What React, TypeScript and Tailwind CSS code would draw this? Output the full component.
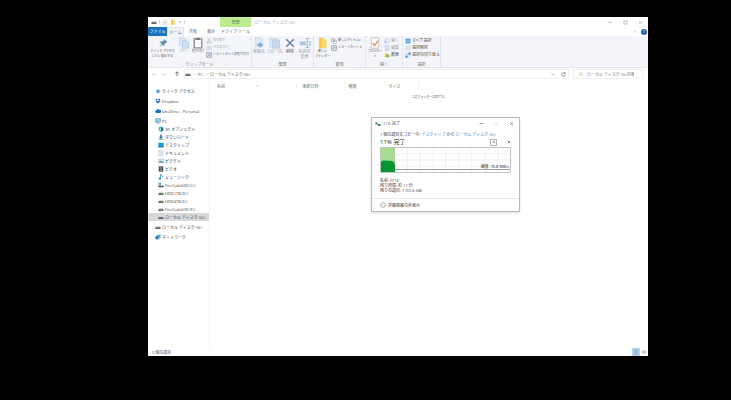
import type { ReactNode } from "react";
import clsx from "clsx";

type IconProps = { className?: string };

function Svg({ className = "size-2", children }: { className?: string; children: ReactNode }) {
  return (
    <svg viewBox="0 0 16 16" fill="none" className={clsx("shrink-0", className)} aria-hidden="true">
      {children}
    </svg>
  );
}

const PinIcon = ({ className }: IconProps) => (
  <Svg className={className}>
    <path d="M10 3l4 4-2 .5-2 2-.5 3L7 10l-4 4 3-5-2.500-2.500 3-.5L9 5z" fill="#5f8fb0" />
  </Svg>
);

const PagesIcon = ({ className }: IconProps) => (
  <Svg className={className}>
    <path d="M2 1h6l2 2v8H2z" fill="#dceaf8" stroke="#b5cde6" />
    <path d="M6 5h6l2 2v8H6z" fill="#cfe1f4" stroke="#a9c5e2" />
  </Svg>
);

const ClipboardIcon = ({ className }: IconProps) => (
  <Svg className={className}>
    <path d="M3 2.500h10v12H3z" fill="#fff" stroke="#8a8b8f" strokeWidth="1.800" />
    <path d="M5.500 1h5v3h-5z" fill="#77787c" />
  </Svg>
);

const ScissorsIcon = ({ className }: IconProps) => (
  <Svg className={className}>
    <path d="M5 10l6-9M11 10L5 1" stroke="#a7adb5" strokeWidth="1.500" />
    <circle cx="4" cy="12" r="2.500" stroke="#a7adb5" strokeWidth="1.500" />
    <circle cx="12" cy="12" r="2.500" stroke="#a7adb5" strokeWidth="1.500" />
  </Svg>
);

const PathIcon = ({ className }: IconProps) => (
  <Svg className={className}>
    <path d="M1 4h14v9H1z" fill="#e9eef5" stroke="#b5bfcc" />
    <path d="M4 6l2 4 2-4 2 4" stroke="#8d9bad" />
  </Svg>
);

const ShortcutIcon = ({ className }: IconProps) => (
  <Svg className={className}>
    <path d="M2 2h12v12H2z" fill="#fff" stroke="#77808c" strokeWidth="2" />
    <path d="M5 11l5-5M6 6h4v4" stroke="#456f9c" strokeWidth="1.500" />
  </Svg>
);

const MoveToIcon = ({ className }: IconProps) => (
  <Svg className={className}>
    <path d="M3 1h7l3 3v9H3z" fill="#dfeaf6" stroke="#c6d7e9" />
    <path d="M6 9h3V6.500l4.500 4L9 14.500V12H6z" fill="#7fadd8" />
  </Svg>
);

const CopyToIcon = ({ className }: IconProps) => (
  <Svg className={className}>
    <path d="M1 2h9v11H1z" fill="#dfeaf6" stroke="#bdd0e5" />
    <path d="M5 4h9v11H5z" fill="#c4dcf3" stroke="#abc7e3" />
  </Svg>
);

const DeleteIcon = ({ className }: IconProps) => (
  <Svg className={className}>
    <path d="M3 3l10 10M13 3L3 13" stroke="#6f86a8" strokeWidth="2.200" />
  </Svg>
);

const RenameIcon = ({ className }: IconProps) => (
  <Svg className={className}>
    <path d="M1 6h8v5H1z" fill="#a3c5e8" />
    <path d="M9 2h4M9 14h4M11 2v12M13 6h2v5h-2" stroke="#9db3cb" strokeWidth="1.300" />
  </Svg>
);

const FolderIcon = ({ className }: IconProps) => (
  <Svg className={className}>
    <path d="M3 1h6l1 2h3v12H3z" fill="#fbd86c" />
    <path d="M3 1h3v14H3z" fill="#f2c443" />
  </Svg>
);

const NewItemIcon = ({ className }: IconProps) => (
  <Svg className={className}>
    <path d="M1 2h8v7H1zM6 6h8v8H6z" fill="#fff" stroke="#8b8f96" strokeWidth="1.500" />
    <path d="M3 4h4v2H3z" fill="#eab84d" />
  </Svg>
);

const PropertiesIcon = ({ className }: IconProps) => (
  <Svg className={className}>
    <path d="M3 1h10v14H3z" fill="#fff" stroke="#b4b7bc" />
    <path d="M5 8l2.500 3.500L12 5" stroke="#e5914f" strokeWidth="1.800" />
  </Svg>
);

const OpenIcon = ({ className }: IconProps) => (
  <Svg className={className}>
    <path d="M3 2h11v11H3z" fill="#eaf1f9" stroke="#a7bdd6" />
    <path d="M1 14V7h6v7z" fill="#a9cbed" />
  </Svg>
);

const HistoryIcon = ({ className }: IconProps) => (
  <Svg className={className}>
    <path d="M2 4h6l1 2h5v8H2z" fill="#e5d23c" />
    <circle cx="10" cy="10" r="4" fill="#76b043" />
    <path d="M10 8v2.500h2" stroke="#fff" />
  </Svg>
);

const SelectAllIcon = ({ className }: IconProps) => (
  <Svg className={className}>
    <path d="M1 1h14v14H1z" fill="#b9dcf8" />
    <path d="M2 2h5v5H2zM9 2h5v5H9zM2 9h5v5H2zM9 9h5v5H9z" fill="#3e93d6" />
  </Svg>
);

const SelectNoneIcon = ({ className }: IconProps) => (
  <Svg className={className}>
    <path d="M2 2h5v5H2zM9 2h5v5H9zM2 9h5v5H2zM9 9h5v5H9z" stroke="#bbc3cc" />
  </Svg>
);

const InvertIcon = ({ className }: IconProps) => (
  <Svg className={className}>
    <path d="M9 1h6v6H9zM1 9h6v6H1z" fill="#3e93d6" />
    <path d="M2 2h5v5H2zM9 9h5v5H9z" stroke="#9ac4e8" />
  </Svg>
);

const DriveIcon = ({ className }: IconProps) => (
  <Svg className={className}>
    <path d="M3 6h10l2 3H1z" fill="#c4c6c9" />
    <path d="M1 9h14v4H1z" fill="#4b4d51" />
    <path d="M11 10.500h2v1h-2z" fill="#8ae08d" />
  </Svg>
);

const SystemDriveIcon = ({ className }: IconProps) => (
  <Svg className={className}>
    <path d="M1 2h3v3H1zM5 2h3v3H5zM1 6h3v3H1zM5 6h3v3H5z" fill="#2f95d8" />
    <path d="M1 10h14v4H1z" fill="#4b4d51" />
  </Svg>
);

const StarIcon = ({ className }: IconProps) => (
  <Svg className={className}>
    <path d="M8 1l2 5 5 .5-4 3.500 1.500 5L8 12l-4.500 3L5 10 1 6.500 6 6z" fill="#3f9bd9" />
  </Svg>
);

const DropboxIcon = ({ className }: IconProps) => (
  <Svg className={className}>
    <path d="M4.500 1L8 3.500 4.500 6 1 3.500zM11.500 1L15 3.500 11.500 6 8 3.500zM4.500 6L8 8.500 4.500 11 1 8.500zM11.500 6L15 8.500 11.500 11 8 8.500zM8 9.500l3.500 2.500L8 14.500 4.500 12z" fill="#1667b7" />
  </Svg>
);

const CloudIcon = ({ className }: IconProps) => (
  <Svg className={className}>
    <path d="M4 13a3.500 3.500 0 010-7 4.500 4.500 0 018-1 4 4 0 011 8z" fill="#1673bd" />
  </Svg>
);

const ComputerIcon = ({ className }: IconProps) => (
  <Svg className={className}>
    <path d="M1 2h14v9H1z" fill="#8fd3f3" stroke="#4590bd" strokeWidth="1.500" />
    <path d="M5 14h6M8 11v3" stroke="#4b7c9a" strokeWidth="1.500" />
  </Svg>
);

const CubeIcon = ({ className }: IconProps) => (
  <Svg className={className}>
    <path d="M8 1l6 3v8l-6 3-6-3V4z" fill="#31b1c9" />
    <path d="M8 7l6-3v8l-6 3z" fill="#19738c" />
    <path d="M5 6l3 1v4L5 10z" fill="#e9fbff" />
  </Svg>
);

const DownloadIcon = ({ className }: IconProps) => (
  <Svg className={className}>
    <path d="M6 1h4v6h4l-6 6-6-6h4z" fill="#287fbe" />
    <path d="M2 13h12v2H2z" fill="#70808e" />
  </Svg>
);

const DesktopIcon = ({ className }: IconProps) => (
  <Svg className={className}>
    <path d="M1 2h14v12H1z" fill="#149be0" />
    <path d="M1 12h14v2H1z" fill="#0c649b" />
  </Svg>
);

const DocumentIcon = ({ className }: IconProps) => (
  <Svg className={className}>
    <path d="M3 1h10v14H3z" fill="#f7fafc" stroke="#8c9daa" />
    <path d="M5 5h6M5 8h6M5 11h6" stroke="#6fa3c7" />
  </Svg>
);

const PictureIcon = ({ className }: IconProps) => (
  <Svg className={className}>
    <path d="M1 3h14v10H1z" fill="#cfe9f5" stroke="#889ba8" />
    <path d="M2 12l4-5 3 3 2-2 3 4z" fill="#3e8b8a" />
  </Svg>
);

const VideoIcon = ({ className }: IconProps) => (
  <Svg className={className}>
    <path d="M2 1h12v14H2z" fill="#43474e" />
    <path d="M5 3h6v4H5zM5 9h6v4H5z" fill="#8298ad" />
  </Svg>
);

const MusicIcon = ({ className }: IconProps) => (
  <Svg className={className}>
    <path d="M7 1v11" stroke="#1682bb" strokeWidth="2" />
    <path d="M7 1c1 3 6 3 5 8" stroke="#1682bb" strokeWidth="2" />
    <circle cx="5" cy="12" r="3" fill="#1682bb" />
  </Svg>
);

const NetworkIcon = ({ className }: IconProps) => (
  <Svg className={className}>
    <path d="M5 2h10v8H5z" fill="#55b0e2" />
    <circle cx="5" cy="10" r="4.500" fill="#2378ae" />
    <path d="M9 13h5" stroke="#5d7d92" strokeWidth="2" />
  </Svg>
);

const SearchIcon = ({ className }: IconProps) => (
  <Svg className={className}>
    <circle cx="10" cy="6" r="4" stroke="#a5a5a5" strokeWidth="1.500" />
    <path d="M7 9l-5 5" stroke="#a5a5a5" strokeWidth="1.500" />
  </Svg>
);

const CopyingIcon = ({ className }: IconProps) => (
  <Svg className={className}>
    <path d="M1 4h6v5H1z" fill="#438b73" />
    <path d="M8 8h7v5H8z" fill="#396d91" />
    <path d="M6 9l3 3" stroke="#4aa864" strokeWidth="2" />
  </Svg>
);

function Stroke({ d, className = "size-1.5 text-neutral-500" }: { d: string; className?: string }) {
  return (
    <Svg className={className}>
      <path d={d} stroke="currentColor" strokeWidth="2" />
    </Svg>
  );
}

const MINIMIZE = "M2 8h12";
const MAXIMIZE = "M3 3h10v10H3z";
const CLOSE = "M3 3l10 10M13 3L3 13";
const CHEVRON_DOWN = "M3 6l5 5 5-5";
const CHEVRON_RIGHT = "M6 3l5 5-5 5";

type IconType = (props: IconProps) => ReactNode;

interface BigButtonProps {
  icon: IconType;
  lines: string[];
  width: string;
  muted?: boolean;
}

function BigButton({ icon: Icon, lines, width, muted }: BigButtonProps) {
  return (
    <button
      className={clsx(
        "flex shrink-0 flex-col items-center whitespace-nowrap",
        width,
        muted ? "text-neutral-400" : "text-neutral-600"
      )}
    >
      <Icon className="size-3" />
      {lines.map((line) => (
        <span key={line}>{line}</span>
      ))}
    </button>
  );
}

function SmallButton({ icon: Icon, label, muted }: { icon: IconType; label: string; muted?: boolean }) {
  return (
    <button
      className={clsx(
        "flex h-[7px] items-center gap-px whitespace-nowrap",
        muted ? "text-neutral-400" : "text-neutral-600"
      )}
    >
      <Icon className="size-[6px]" />
      {label}
    </button>
  );
}

interface RibbonGroupProps {
  label: string;
  width: string;
  dense?: boolean;
  children: ReactNode;
}

function RibbonGroup({ label, width, dense, children }: RibbonGroupProps) {
  return (
    <div className={clsx("flex shrink-0 flex-col justify-between border-r border-[#e3e4e9] pt-px", width)}>
      <div className={clsx("flex", dense && "text-[3px]")}>{children}</div>
      <div className="text-center text-neutral-500">{label}</div>
    </div>
  );
}

function Ribbon() {
  return (
    <div className="flex h-8 shrink-0 overflow-hidden border-b border-[#e6e7eb] bg-[#f4f5fa]">
      <RibbonGroup label="クリップボード" width="w-[104px]" dense>
        <BigButton icon={PinIcon} lines={["クイック アクセス", "にピン留めする"]} width="w-[29px]" />
        <BigButton icon={PagesIcon} lines={["コピー"]} width="w-[13px]" muted />
        <BigButton icon={ClipboardIcon} lines={["貼り付け"]} width="w-[16px]" />
        <div className="flex flex-col">
          <SmallButton icon={ScissorsIcon} label="切り取り" muted />
          <SmallButton icon={PathIcon} label="パスのコピー" muted />
          <SmallButton icon={ShortcutIcon} label="ショートカットの貼り付け" />
        </div>
      </RibbonGroup>
      <RibbonGroup label="整理" width="w-[62px]">
        <BigButton icon={MoveToIcon} lines={["移動先"]} width="w-[14px]" muted />
        <BigButton icon={CopyToIcon} lines={["コピー先"]} width="w-[17px]" muted />
        <BigButton icon={DeleteIcon} lines={["削除"]} width="w-[14px]" />
        <BigButton icon={RenameIcon} lines={["名前の", "変更"]} width="w-[15px]" muted />
      </RibbonGroup>
      <RibbonGroup label="新規" width="w-[52px]" dense>
        <BigButton icon={FolderIcon} lines={["新しい", "フォルダー"]} width="w-[17px]" />
        <div className="flex flex-col">
          <SmallButton icon={NewItemIcon} label="新しいアイテム ▾" />
          <SmallButton icon={ShortcutIcon} label="ショートカット ▾" />
        </div>
      </RibbonGroup>
      <RibbonGroup label="開く" width="w-[37px]" dense>
        <BigButton icon={PropertiesIcon} lines={["プロパティ", "▾"]} width="w-[18px]" />
        <div className="flex flex-col text-[4px]">
          <SmallButton icon={OpenIcon} label="開く" muted />
          <SmallButton icon={DocumentIcon} label="編集" muted />
          <SmallButton icon={HistoryIcon} label="履歴" />
        </div>
      </RibbonGroup>
      <RibbonGroup label="選択" width="w-[38px]">
        <div className="flex flex-col pl-0.5">
          <SmallButton icon={SelectAllIcon} label="すべて選択" />
          <SmallButton icon={SelectNoneIcon} label="選択解除" />
          <SmallButton icon={InvertIcon} label="選択の切り替え" />
        </div>
      </RibbonGroup>
    </div>
  );
}

function TitleBar() {
  return (
    <header className="flex h-[19px] shrink-0">
      <div className="flex w-[72px] flex-col">
        <div className="flex h-2.5 items-center gap-0.5 pl-[3px]">
          <DriveIcon className="size-[6px]" />
          <span className="h-1 border-l border-neutral-300" />
          <PropertiesIcon className="size-[6px]" />
          <FolderIcon className="size-[6px]" />
          <Stroke d={CHEVRON_DOWN} className="size-1 text-neutral-600" />
          <span className="h-1 border-l border-neutral-300" />
        </div>
        <nav className="flex h-[9px] items-stretch text-center">
          <button className="w-[19px] bg-[#1a74bd] text-white">ファイル</button>
          <button className="w-[17px] border-x border-t border-[#e3e4e9] bg-[#f4f5fa] text-[#3b79b3]">ホーム</button>
          <button className="w-[18px] text-neutral-600">共有</button>
          <button className="w-[18px] text-neutral-600">表示</button>
        </nav>
      </div>
      <div className="flex w-[31px] flex-col text-center">
        <div className="flex h-2.5 items-center justify-center bg-[#bdeb94] text-[#4d783a]">管理</div>
        <button className="h-[9px] whitespace-nowrap text-neutral-600">ドライブ ツール</button>
      </div>
      <div className="flex h-2.5 items-center pl-1 text-neutral-400">ローカル ディスク (G:)</div>
      <div className="ml-auto flex flex-col items-end">
        <div className="flex h-2.5 items-center gap-2.5 pr-[5px]">
          <button aria-label="最小化"><Stroke d={MINIMIZE} className="size-[5px] text-neutral-400" /></button>
          <button aria-label="最大化"><Stroke d={MAXIMIZE} className="size-[5px] text-neutral-400" /></button>
          <button aria-label="閉じる"><Stroke d={CLOSE} className="size-[5px] text-neutral-400" /></button>
        </div>
        <div className="flex h-[9px] items-center gap-1 pr-px">
          <Stroke d="M3 10l5-5 5 5" className="size-1 text-neutral-400" />
          <button aria-label="ヘルプ" className="flex size-[6px] items-center justify-center rounded-full bg-[#1768ad] text-white">
            ?
          </button>
        </div>
      </div>
    </header>
  );
}

function AddressBar() {
  return (
    <div className="flex h-3 shrink-0 items-center gap-1 pr-1 pl-1 text-neutral-600">
      <button aria-label="戻る"><Stroke d="M14 8H2M7 3L2 8l5 5" className="size-[5px] text-neutral-300" /></button>
      <button aria-label="進む"><Stroke d="M2 8h12M9 3l5 5-5 5" className="size-[5px] text-neutral-300" /></button>
      <button aria-label="上へ" className="ml-1"><Stroke d="M8 14V2M3 7l5-5 5 5" className="size-1.5 text-neutral-600" /></button>
      <div className="flex h-2.5 flex-1 items-center gap-[2px] border border-[#f0f0f0]">
        <DriveIcon className="size-[6px]" />
        <Stroke d={CHEVRON_RIGHT} className="size-[3px] text-neutral-500" />
        <span>PC</span>
        <Stroke d={CHEVRON_RIGHT} className="size-[3px] text-neutral-500" />
        <span>ローカル ディスク (G:)</span>
        <Stroke d={CHEVRON_DOWN} className="ml-auto size-1 text-neutral-600" />
        <button aria-label="更新" className="mr-0.5 ml-1">
          <Stroke d="M12 4a5.500 5.500 0 101.500 5M13 1v4H9" className="size-[5px] text-neutral-600" />
        </button>
      </div>
      <label className="flex h-2.5 w-[71px] items-center gap-1 border border-[#f0f0f0] pl-1">
        <SearchIcon className="size-[5px]" />
        <input
          type="search"
          aria-label="検索"
          placeholder="ローカル ディスク (G:)の検索"
          className="min-w-0 flex-1 outline-none placeholder:text-neutral-500"
        />
      </label>
    </div>
  );
}

interface TreeItem {
  label: string;
  icon: IconType;
  selected?: boolean;
}

const pcItems: TreeItem[] = [
  { label: "3D オブジェクト", icon: CubeIcon },
  { label: "ダウンロード", icon: DownloadIcon },
  { label: "デスクトップ", icon: DesktopIcon },
  { label: "ドキュメント", icon: DocumentIcon },
  { label: "ピクチャ", icon: PictureIcon },
  { label: "ビデオ", icon: VideoIcon },
  { label: "ミュージック", icon: MusicIcon },
  { label: "FireCuda500 (C:)", icon: SystemDriveIcon },
  { label: "HDD1TB (D:)", icon: DriveIcon },
  { label: "HDD4TB (E:)", icon: DriveIcon },
  { label: "FireCuda500 (F:)", icon: DriveIcon },
  { label: "ローカル ディスク (G:)", icon: DriveIcon, selected: true },
];

function TreeRow({ item, nested }: { item: TreeItem; nested?: boolean }) {
  const Icon = item.icon;
  return (
    <a
      href="#"
      className={clsx(
        "flex h-2 items-center gap-px whitespace-nowrap text-neutral-700",
        nested ? "pl-2.5" : "pl-[7px]",
        item.selected && "bg-[#d9d9dc]"
      )}
    >
      <Icon className="size-[6px]" />
      {item.label}
    </a>
  );
}

function Sidebar() {
  return (
    <nav className="flex w-[61px] shrink-0 flex-col gap-0.5 pt-[7px]">
      <TreeRow item={{ label: "クイック アクセス", icon: StarIcon }} />
      <TreeRow item={{ label: "Dropbox", icon: DropboxIcon }} />
      <TreeRow item={{ label: "OneDrive - Personal", icon: CloudIcon }} />
      <div>
        <TreeRow item={{ label: "PC", icon: ComputerIcon }} />
        {pcItems.map((item) => (
          <TreeRow key={item.label} item={item} nested />
        ))}
      </div>
      <TreeRow item={{ label: "ローカル ディスク (G:)", icon: DriveIcon }} />
      <TreeRow item={{ label: "ネットワーク", icon: NetworkIcon }} />
    </nav>
  );
}

function FileList() {
  return (
    <main className="flex-1 border-l border-[#f5f5f5] pt-px">
      <table className="w-full table-fixed text-left text-neutral-500">
        <thead>
          <tr className="h-2.5">
            <th className="w-[86px] pl-[7px] font-normal">
              <span className="flex items-center justify-between pr-[37px]">
                名前
                <Stroke d="M3 10l5-5 5 5" className="size-1 text-neutral-400" />
              </span>
            </th>
            <th className="w-[48px] border-l border-[#f6f6f6] pl-1.5 font-normal">更新日時</th>
            <th className="w-[40px] border-l border-[#f6f6f6] pl-1 font-normal">種類</th>
            <th className="w-[34px] border-l border-[#f6f6f6] pl-1 font-normal">サイズ</th>
            <th className="border-l border-[#f6f6f6]" />
          </tr>
        </thead>
        <tbody>
          <tr>
            <td colSpan={5} className="pt-1 text-center text-[3px] text-neutral-600">このフォルダーは空です。</td>
          </tr>
        </tbody>
      </table>
    </main>
  );
}

function SpeedChart() {
  return (
    <div className="relative h-[26px] border border-[#c4c4c4] bg-white">
      <svg viewBox="0 0 128 24" preserveAspectRatio="none" className="block size-full">
        <path
          d="M13 0v24M26 0v24M39 0v24M52 0v24M64 0v24M77 0v24M90 0v24M103 0v24M116 0v24M0 6h128M0 12h128M0 18h128"
          stroke="#e7ebe7"
          strokeWidth="0.700"
        />
        <path d="M0 0h14v24H0z" fill="#a7dc92" />
        <path d="M0 14c1-1.500 3-1.500 6-1.300 3 0 6-.2 7 1.800l1 3V24H0z" fill="#079432" />
        <path d="M14 21.500h114" stroke="#888" strokeWidth="0.800" />
      </svg>
      <span className="absolute right-px bottom-[3px] text-neutral-800">速度: 76.8 MB/s</span>
    </div>
  );
}

function CopyDialog() {
  return (
    <section
      role="dialog"
      aria-label="11% 完了"
      className="absolute top-[100px] left-[223px] w-[149px] border border-[#b9bbbd] bg-white text-neutral-700 shadow-sm"
    >
      <div className="flex h-[11px] items-center gap-0.5 px-[3px]">
        <CopyingIcon className="size-[6px]" />
        <span>11% 完了</span>
        <div className="ml-auto flex items-center gap-2.5 pr-0.5">
          <button aria-label="最小化"><Stroke d={MINIMIZE} className="size-[5px] text-neutral-500" /></button>
          <button aria-label="最大化"><Stroke d={MAXIMIZE} className="size-[5px] text-neutral-200" /></button>
          <button aria-label="閉じる"><Stroke d={CLOSE} className="size-[5px] text-neutral-500" /></button>
        </div>
      </div>
      <div className="px-2">
        <p className="pt-[3px] whitespace-nowrap">
          1 個の項目をコピー中: <a href="#" className="text-[#2f83c5]">デスクトップ</a> から{" "}
          <a href="#" className="text-[#2f83c5]">ローカル ディスク (G:)</a>
        </p>
        <div className="flex h-2.5 items-center">
          <h1 className="text-[6px] leading-[8px] text-neutral-800">11% 完了</h1>
          <button aria-label="一時停止" className="mr-2.5 ml-auto flex size-[7px] items-center justify-center border border-[#b0b0b0]">
            <Stroke d="M5 3v10M11 3v10" className="size-1 text-neutral-700" />
          </button>
          <button aria-label="キャンセル">
            <Stroke d={CLOSE} className="size-1 text-neutral-900" />
          </button>
        </div>
        <SpeedChart />
        <dl className="pt-[5px]">
          <div className="flex gap-px"><dt>名前:</dt><dd>FF14</dd></div>
          <div className="flex gap-px"><dt>残り時間:</dt><dd>約 11 分</dd></div>
          <div className="flex gap-px"><dt>残りの項目:</dt><dd>1 (59.6 GB)</dd></div>
        </dl>
      </div>
      <div className="mt-[5px] flex h-[13px] items-center border-t border-[#e8e8e8] px-2">
        <button className="flex items-center gap-0.5">
          <span className="flex size-[6px] items-center justify-center rounded-full border border-[#b8b8b8]">
            <Stroke d="M3 10l5-5 5 5" className="size-1 text-neutral-500" />
          </span>
          詳細情報の非表示
        </button>
      </div>
    </section>
  );
}

function StatusBar() {
  return (
    <footer className="flex h-2 shrink-0 items-center justify-between pr-0.5 pl-1 text-neutral-600">
      <span>0 個の項目</span>
      <div className="flex items-center gap-0.5">
        <button aria-label="詳細" className="flex size-2 items-center justify-center bg-[#b6d8ec]">
          <Stroke d="M2 3h12M2 8h12M2 13h12" className="size-1.5 text-[#7698ac]" />
        </button>
        <button aria-label="大アイコン"><Stroke d="M2 4h12v8H2z" className="size-1 text-neutral-500" /></button>
      </div>
    </footer>
  );
}

export default function App() {
  return (
    <div
      lang="ja"
      className="flex min-h-screen flex-col bg-black pt-[17px] pr-[83px] pb-[44px] pl-[148px] font-['Open_Sans','Noto_Sans_CJK_JP',sans-serif] text-[4px] leading-[5px]"
    >
      <div className="relative flex flex-1 flex-col bg-white">
        <TitleBar />
        <Ribbon />
        <AddressBar />
        <div className="flex flex-1">
          <Sidebar />
          <FileList />
        </div>
        <StatusBar />
        <CopyDialog />
      </div>
    </div>
  );
}
